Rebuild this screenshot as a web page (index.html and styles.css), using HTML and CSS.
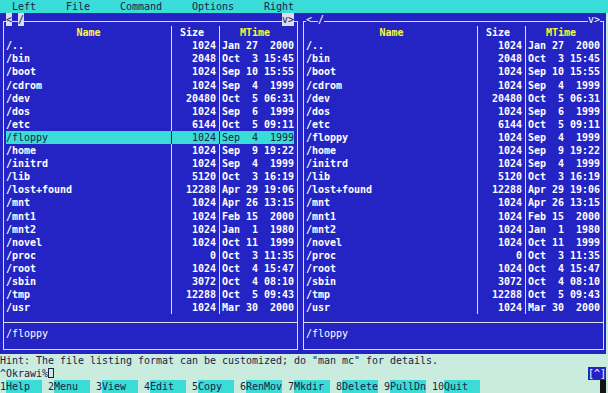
FILE: index.html
```html
<!DOCTYPE html>
<html lang="en">
<head>
  <meta charset="UTF-8" />
  <title>Midnight Commander</title>
  <link rel="stylesheet" href="styles.css">
</head>
<body>
  <div class="menubar">  Left     File     Command     Options     Right</div>

  <div class="panels">
    <div class="panel panel-left">
      <div class="frame">
        <div class="title title-left"><span class="hl">&lt;</span><span class="gap"></span><span class="hl">/</span></div>
        <div class="title title-right"><span class="hl">v</span><span class="hl">&gt;</span></div>
        <div class="row header">
          <div class="c-name yellow">Name</div>
          <div class="c-size">Size</div>
          <div class="c-time yellow">MTime</div>
        </div>
        <div class="listing" data-selected="/floppy"></div>
        <div class="status">/floppy</div>
      </div>
    </div>

    <div class="panel panel-right">
      <div class="frame">
        <div class="title title-left"><span>&lt;</span><span class="gap"></span><span>/</span></div>
        <div class="title title-right"><span>v</span><span>&gt;</span></div>
        <div class="row header">
          <div class="c-name yellow">Name</div>
          <div class="c-size">Size</div>
          <div class="c-time yellow">MTime</div>
        </div>
        <div class="listing"></div>
        <div class="status">/floppy</div>
      </div>
    </div>
  </div>

  <div class="hint">Hint: The file listing format can be customized; do "man mc" for details.</div>

  <div class="prompt">
    <span>^Okrawi%<span class="cursor"></span></span>
    <span class="corner-btn">[^]</span>
  </div>

  <div class="buttonbar">
    <div class="key"><span class="num">1</span><span class="label">Help</span></div>
    <div class="key"><span class="num">2</span><span class="label">Menu</span></div>
    <div class="key"><span class="num">3</span><span class="label">View</span></div>
    <div class="key"><span class="num">4</span><span class="label">Edit</span></div>
    <div class="key"><span class="num">5</span><span class="label">Copy</span></div>
    <div class="key"><span class="num">6</span><span class="label">RenMov</span></div>
    <div class="key"><span class="num">7</span><span class="label">Mkdir</span></div>
    <div class="key"><span class="num">8</span><span class="label">Delete</span></div>
    <div class="key"><span class="num">9</span><span class="label">PullDn</span></div>
    <div class="key"><span class="num">10</span><span class="label">Quit</span></div>
    <div class="block"></div>
  </div>

  <script>
    const entries = [
      ["/..", "1024", "Jan 27  2000"],
      ["/bin", "2048", "Oct  3 15:45"],
      ["/boot", "1024", "Sep 10 15:55"],
      ["/cdrom", "1024", "Sep  4  1999"],
      ["/dev", "20480", "Oct  5 06:31"],
      ["/dos", "1024", "Sep  6  1999"],
      ["/etc", "6144", "Oct  5 09:11"],
      ["/floppy", "1024", "Sep  4  1999"],
      ["/home", "1024", "Sep  9 19:22"],
      ["/initrd", "1024", "Sep  4  1999"],
      ["/lib", "5120", "Oct  3 16:19"],
      ["/lost+found", "12288", "Apr 29 19:06"],
      ["/mnt", "1024", "Apr 26 13:15"],
      ["/mnt1", "1024", "Feb 15  2000"],
      ["/mnt2", "1024", "Jan  1  1980"],
      ["/novel", "1024", "Oct 11  1999"],
      ["/proc", "0", "Oct  3 11:35"],
      ["/root", "1024", "Oct  4 15:47"],
      ["/sbin", "3072", "Oct  4 08:10"],
      ["/tmp", "12288", "Oct  5 09:43"],
      ["/usr", "1024", "Mar 30  2000"]
    ];

    function cell(cls, text) {
      const div = document.createElement("div");
      div.className = cls;
      div.textContent = text;
      return div;
    }

    document.querySelectorAll(".listing").forEach(list => {
      const selected = list.dataset.selected;
      entries.forEach(e => {
        const row = document.createElement("div");
        row.className = "row";
        if (e[0] === selected) row.classList.add("selected");
        row.appendChild(cell("c-name", e[0]));
        row.appendChild(cell("c-size", e[1]));
        row.appendChild(cell("c-time", e[2]));
        list.appendChild(row);
      });
    });
  </script>
</body>
</html>
```

FILE: styles.css
```css
html, body {
  margin: 0;
  padding: 0;
  width: 608px;
  height: 393px;
  overflow: hidden;
  background: #c9ecdf;
  font-family: "DejaVu Sans Mono", "Liberation Mono", monospace;
  font-size: 10px;
  letter-spacing: -0.02px;
  /* taller than the 13.1px cell so the baseline sits a bit lower, like the terminal font */
  line-height: 14.5px;
  color: #1c2048;
}

.menubar {
  height: 13.1px;
  background: #3adcd8;
  white-space: pre;
}

.panels {
  display: flex;
  width: 606px;
  height: 340.6px;
}

.panel {
  background: #2424c4;
  padding: 8px 2px 4.1px 3px;
  box-sizing: border-box;
}

.panel-left  { width: 300px; }
.panel-right { width: 306px; }

.frame {
  position: relative;
  height: 100%;
  box-sizing: border-box;
  border: 1px solid #dcdcec;
  padding: 4.1px 3px 0 2px;
  color: #fff;
}

/* path and history marks sitting on the top border */
.title {
  position: absolute;
  top: -9px;
  display: flex;
  height: 13.1px;
}

.title-left  { left: 2px; }
.title-right { right: 3px; }

.title span {
  width: 6px;
  text-align: center;
  background: #2424c4;
}

.title span.gap {
  background: transparent;
}

.title span.hl {
  background: #dcdcec;
  color: #1c2048;
}

.row {
  display: flex;
  height: 13.1px;
  white-space: pre;
  font-weight: bold;
}

.c-name {
  width: 165px;
  overflow: hidden;
}

.panel-right .c-name {
  width: 171px;
}

.c-size {
  width: 42px;
  padding: 0 3px 0 2px;
  border-left: 1px solid #dcdcec;
  text-align: right;
}

.c-time {
  width: 72px;
  padding-left: 2px;
  border-left: 1px solid #dcdcec;
}

.header .c-name { text-align: center; }
.header .c-size { text-align: left; text-indent: 6px; }
.header .c-time { text-indent: 18px; }

.yellow {
  color: #f8f83c;
}

.row.selected {
  background: #3adcd8;
  color: #1c2048;
  font-weight: normal;
}

.row.selected .c-size,
.row.selected .c-time {
  border-color: #1c2048;
}

.status {
  margin: 8px -3px 0 -2px;
  padding: 4.1px 3px 8px 2px;
  border-top: 1px solid #dcdcec;
  height: 13.1px;
  white-space: pre;
}

.hint {
  height: 13.1px;
  white-space: pre;
}

.prompt {
  display: flex;
  justify-content: space-between;
  width: 606px;
  height: 13.1px;
  white-space: pre;
}

.cursor {
  display: inline-block;
  width: 4px;
  height: 8px;
  border: 1px solid #1c2048;
  vertical-align: top;
  margin-top: 1px;
}

.corner-btn {
  width: 18px;
  background: #2424c4;
  color: #fff;
}

.buttonbar {
  display: flex;
  width: 606px;
  height: 13.1px;
  white-space: pre;
}

.key {
  display: flex;
  width: 48px;
}

.key .label {
  width: 36px;
  background: #3adcd8;
}

.block {
  margin-left: auto;
  width: 6px;
  background: #141414;
}
```
